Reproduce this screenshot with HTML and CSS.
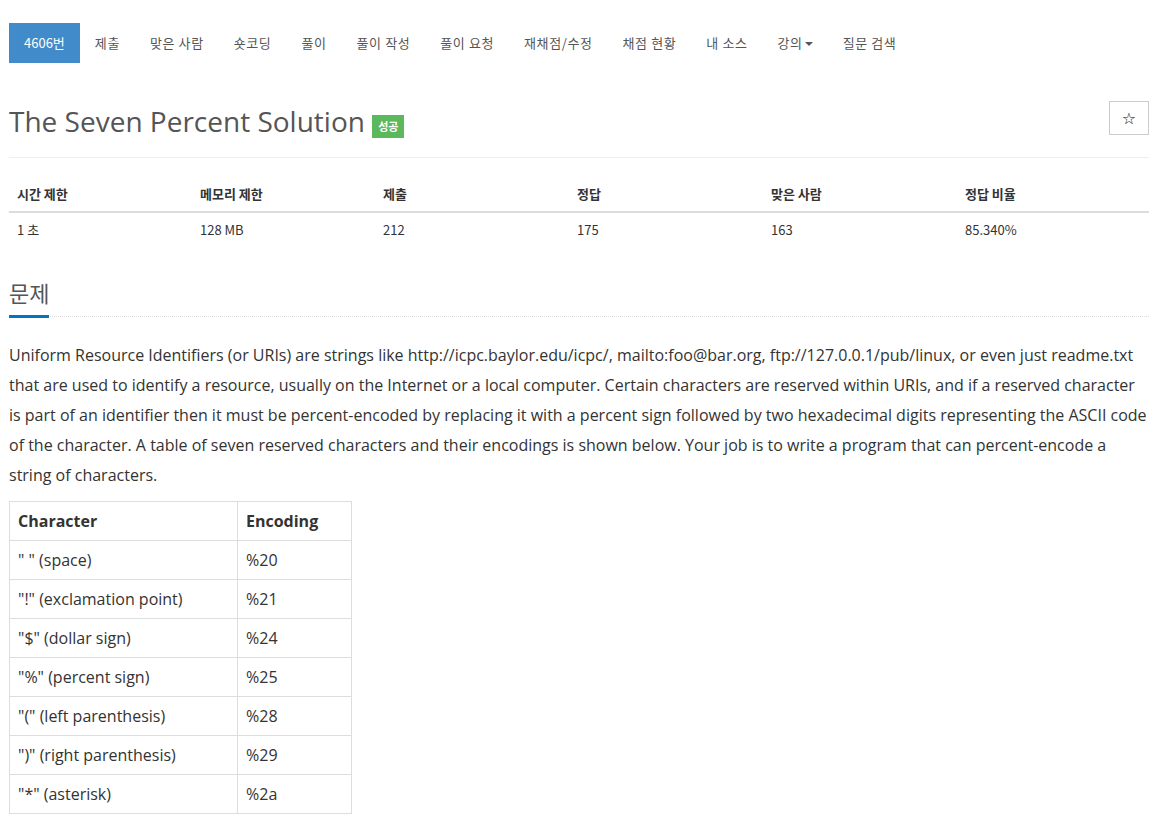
FILE: index.html
```html
<html>
  <head>
    <title>4606번: The Seven Percent Solution</title>
    <link rel="stylesheet" href="styles.css">
  </head>
  <body>
    <div id="content">
      <ul class="nav">
        <li class="active"><a href="#">4606번</a></li>
        <li><a href="#">제출</a></li>
        <li><a href="#">맞은 사람</a></li>
        <li><a href="#">숏코딩</a></li>
        <li><a href="#">풀이</a></li>
        <li><a href="#">풀이 작성</a></li>
        <li><a href="#">풀이 요청</a></li>
        <li><a href="#">재채점/수정</a></li>
        <li><a href="#">채점 현황</a></li>
        <li><a href="#">내 소스</a></li>
        <li><a href="#">강의<span class="caret"></span></a></li>
        <li><a href="#">질문 검색</a></li>
      </ul>

      <div class="page-header">
        <h1>The Seven Percent Solution <span class="label">성공</span></h1>
        <button class="star">&#9734;</button>
      </div>

      <table class="info">
        <thead>
          <tr>
            <th class="c1">시간 제한</th>
            <th class="c2">메모리 제한</th>
            <th class="c3">제출</th>
            <th class="c4">정답</th>
            <th class="c5">맞은 사람</th>
            <th>정답 비율</th>
          </tr>
        </thead>
        <tbody>
          <tr>
            <td>1 초</td>
            <td>128 MB</td>
            <td>212</td>
            <td>175</td>
            <td>163</td>
            <td>85.340%</td>
          </tr>
        </tbody>
      </table>

      <div class="headline">
        <h2>문제</h2>
      </div>

      <p class="problem">Uniform Resource Identifiers (or URIs) are strings like http://icpc.baylor.edu/icpc/, mailto:foo@bar.org, ftp://127.0.0.1/pub/linux, or even just readme.txt that are used to identify a resource, usually on the Internet or a local computer. Certain characters are reserved within URIs, and if a reserved character is part of an identifier then it must be percent-encoded by replacing it with a percent sign followed by two hexadecimal digits representing the ASCII code of the character. A table of seven reserved characters and their encodings is shown below. Your job is to write a program that can percent-encode a string of characters.</p>

      <table class="encodings">
        <tr><th class="char">Character</th><th>Encoding</th></tr>
        <tr><td>" " (space)</td><td>%20</td></tr>
        <tr><td>"!" (exclamation point)</td><td>%21</td></tr>
        <tr><td>"$" (dollar sign)</td><td>%24</td></tr>
        <tr><td>"%" (percent sign)</td><td>%25</td></tr>
        <tr><td>"(" (left parenthesis)</td><td>%28</td></tr>
        <tr><td>")" (right parenthesis)</td><td>%29</td></tr>
        <tr><td>"*" (asterisk)</td><td>%2a</td></tr>
      </table>
    </div>
  </body>
</html>
```

FILE: styles.css
```css
body {
    margin: 0;
    background: #fff;
    font-family: "Open Sans", "Noto Sans CJK KR", sans-serif;
    color: #333;
}
#content {
    width: 1140px;
    margin: 0 0 0 9px;
    padding-top: 23px;
}
.nav {
    display: flex;
    list-style: none;
    margin: 0;
    padding: 0;
}
.nav a {
    display: block;
    height: 40px;
    line-height: 40px;
    padding: 0 15px;
    font-size: 13px;
    letter-spacing: 0.6px;
    color: #555;
    text-decoration: none;
    font-family: "Noto Sans CJK KR", sans-serif;
}
.nav .active a {
    background: #428bca;
    color: #fff;
    letter-spacing: 0;
}
.caret {
    display: inline-block;
    width: 0;
    height: 0;
    margin-left: 2px;
    vertical-align: middle;
    border-top: 4px solid #555;
    border-left: 4px solid transparent;
    border-right: 4px solid transparent;
}
.page-header {
    display: flex;
    justify-content: space-between;
    align-items: center;
    margin-top: 38px;
    padding-bottom: 16px;
    border-bottom: 1px solid #eee;
}
h1 {
    margin: 0;
    font-size: 28px;
    font-weight: 400;
    color: #555;
    line-height: 40px;
}
.label {
    display: inline-block;
    background: #5cb85c;
    color: #fff;
    font-size: 11px;
    font-weight: 700;
    padding: 0 6px;
    height: 23px;
    line-height: 23px;
    vertical-align: 1px;
    font-family: "Noto Sans CJK KR", sans-serif;
}
.star {
    width: 40px;
    height: 34px;
    background: #fff;
    border: 1px solid #ccc;
    font-size: 16px;
    color: #111;
    padding: 0;
    margin-top: -6px;
    font-family: "DejaVu Sans", sans-serif;
}
.info {
    width: 100%;
    border-collapse: collapse;
    margin-top: 18px;
    font-size: 13px;
    font-family: "Noto Sans CJK KR", sans-serif;
}
.info th {
    text-align: left;
    padding: 8px;
    height: 19px;
    border-bottom: 2px solid #ddd;
    font-weight: 700;
}
.info td {
    padding: 7px 8px 9px;
    height: 19px;
}
.c1, .c2 { width: 167px; }
.c3, .c4, .c5 { width: 178px; }
.headline {
    margin-top: 28px;
    border-bottom: 1px dotted #ddd;
}
h2 {
    display: inline-block;
    margin: 0;
    font-size: 22px;
    font-weight: 400;
    line-height: 32px;
    color: #555;
    padding-bottom: 7px;
    border-bottom: 3px solid #0076c0;
    margin-bottom: -2px;
    font-family: "Noto Sans CJK KR", sans-serif;
}
.problem {
    font-size: 16px;
    line-height: 30px;
    margin: 23px 0 11px;
}
.encodings {
    border-collapse: collapse;
    font-size: 16px;
}
.encodings th, .encodings td {
    border: 1px solid #ddd;
    padding: 0 8px;
    height: 39px;
    text-align: left;
}
.encodings th.char {
    width: 211px;
}
.encodings td:last-child, .encodings th:last-child {
    width: 97px;
}
```
